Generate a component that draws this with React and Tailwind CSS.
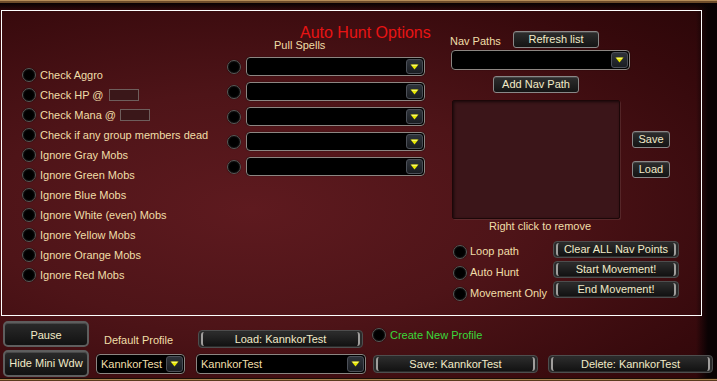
import React from "react";

const cream = "text-[#f0dea8]";

function Radio() {
  return (
    <div className="w-[14px] h-[14px] shrink-0 rounded-full bg-black border border-[#5c5a58] shadow-[inset_0_0_2px_rgba(255,255,255,0.15),0_0_1px_rgba(0,0,0,0.8)]" />
  );
}

function Arrow() {
  return (
    <div className="w-[17px] shrink-0 my-[1px] mr-[1px] rounded-[3px] bg-[linear-gradient(to_bottom,#2e333a,#1a1d22)] border border-[#4c5058] flex items-center justify-center">
      <svg width="9" height="6" viewBox="0 0 9 6">
        <polygon points="0.5,0.5 8.5,0.5 4.5,5.5" fill="#e8e800" />
        <polygon points="1.5,0.8 7.5,0.8 6.8,1.8 2.2,1.8" fill="#fdfd90" />
      </svg>
    </div>
  );
}

function Dropdown({ w, h, text }) {
  return (
    <div
      className={`${w} ${h} shrink-0 flex rounded-[4px] border border-[#8c8682] bg-black shadow-[0_0_1px_rgba(0,0,0,0.9)]`}
    >
      <div className={`flex-1 pl-[4px] flex items-center text-[11px] ${cream} leading-none`}>{text}</div>
      <Arrow />
    </div>
  );
}

function Btn({ w, h, children, extra = "" }) {
  return (
    <div
      className={`${w} ${h} ${extra} shrink-0 rounded-[3px] border border-[#8a8888] bg-[linear-gradient(to_bottom,#2e2e2e,#141414)] shadow-[inset_0_1px_0_rgba(255,255,255,0.12)] flex items-center justify-center text-[11px] text-[#f2ebc8] leading-none`}
    >
      {children}
    </div>
  );
}

function CapBtn({ w, h, children, extra = "" }) {
  return (
    <div
      className={`${w} ${h} ${extra} shrink-0 rounded-[4px] border border-[#4e4e4e] bg-[#2a2a2a] px-[2px] py-[1px] flex`}
    >
      <div className="flex-1 rounded-[3px] border-x-2 border-[#a09e9c] bg-[linear-gradient(to_bottom,#2c2c2c,#121212)] flex items-center justify-center text-[11px] text-[#f2ebc8] leading-none">
        {children}
      </div>
    </div>
  );
}

function BigBtn({ w, h, children, extra = "" }) {
  return (
    <div
      className={`${w} ${h} ${extra} shrink-0 rounded-[5px] border-2 border-[#5e5e5e] bg-[linear-gradient(to_bottom,#2a2a2a,#121212)] shadow-[inset_0_1px_0_rgba(255,255,255,0.15)] flex justify-center text-[11px] text-[#f2ebc8] leading-none`}
    >
      {children}
    </div>
  );
}

const leftRows = [
  "Check Aggro",
  "Check HP @",
  "Check Mana @",
  "Check if any group members dead",
  "Ignore Gray Mobs",
  "Ignore Green Mobs",
  "Ignore Blue Mobs",
  "Ignore White (even) Mobs",
  "Ignore Yellow Mobs",
  "Ignore Orange Mobs",
  "Ignore Red Mobs",
];

export default function App() {
  return (
    <div className="w-[717px] h-[381px] flex flex-col overflow-hidden font-['Liberation_Sans',Arial,sans-serif] bg-black">
      <div className="h-[1px] bg-[#b48c58]" />
      <div className="h-[2px] bg-[#6e4c2a]" />
      <div className="flex-1 flex flex-col pt-[7px] pl-[1px] bg-[linear-gradient(to_bottom,#080102_0px,rgba(8,1,2,0)_9px),linear-gradient(to_right,rgba(8,1,2,0)_696px,#0a0203_708px),radial-gradient(ellipse_at_35%_55%,#5e1a1f_0%,#4e1418_40%,#36090c_80%,#22050700_100%),linear-gradient(#2a0608,#2a0608)]">
        {/* main box */}
        <div className="w-[701px] h-[306px] shrink-0 border border-white flex items-start">
          {/* left column */}
          <div className="ml-[20px] w-[205px] pt-[54px] flex flex-col">
            {leftRows.map((t, i) => (
              <div key={t} className="h-[20px] flex items-center gap-[4px]">
                <Radio />
                <span className={`text-[11px] ${cream} leading-none whitespace-nowrap`}>{t}</span>
                {i === 1 && (
                  <div className="ml-[1px] w-[30px] h-[12px] bg-[#3a1719] border border-[#6e5e5c]" />
                )}
                {i === 2 && (
                  <div className="ml-[0px] w-[30px] h-[12px] bg-[#3a1719] border border-[#6e5e5c]" />
                )}
              </div>
            ))}
          </div>

          {/* middle column */}
          <div className="w-[223px] pt-[13px] flex flex-col">
            <div className="ml-[73px] h-[18px] leading-[18px] text-[16px] text-[#e81414] whitespace-nowrap">
              Auto Hunt Options
            </div>
            <div className={`ml-[47px] mt-[-3px] leading-[12px] text-[11px] ${cream}`}>Pull Spells</div>
            <div className="mt-[6px] flex flex-col gap-[6px]">
              {[0, 1, 2, 3, 4].map((i) => (
                <div key={i} className="h-[19px] flex items-center gap-[5px]">
                  <Radio />
                  <Dropdown w="w-[179px]" h="h-[19px]" text="" />
                </div>
              ))}
            </div>
          </div>

          {/* right column */}
          <div className="pt-[20px] flex flex-col">
            <div className="h-[17px] flex items-center">
              <span className={`w-[63px] text-[11px] ${cream} leading-none pt-[3px]`}>Nav Paths</span>
              <Btn w="w-[86px]" h="h-[17px]">Refresh list</Btn>
            </div>
            <div className="mt-[2px] ml-[1px]">
              <Dropdown w="w-[179px]" h="h-[20px]" text="" />
            </div>
            <Btn w="w-[86px]" h="h-[17px]" extra="mt-[6px] ml-[43px]">Add Nav Path</Btn>
            <div className="mt-[7px] flex items-start">
              <div className="ml-[2px] w-[168px] h-[119px] rounded-[2px] bg-[#3b1519] border border-[#1c0708] shadow-[inset_1px_1px_3px_rgba(0,0,0,0.6),1px_1px_0_rgba(120,80,80,0.35)]" />
              <div className="ml-[12px] pt-[31px] flex flex-col gap-[13px]">
                <Btn w="w-[38px]" h="h-[17px]">Save</Btn>
                <Btn w="w-[38px]" h="h-[17px]">Load</Btn>
              </div>
            </div>
            <div className={`ml-[39px] h-[14px] leading-[14px] text-[11px] ${cream}`}>Right click to remove</div>
            <div className="mt-[8px] flex items-start">
              <div className="ml-[3px] w-[100px] flex flex-col">
                {["Loop path", "Auto Hunt", "Movement Only"].map((t) => (
                  <div key={t} className="h-[21px] flex items-center gap-[3px]">
                    <Radio />
                    <span className={`text-[11px] ${cream} leading-none whitespace-nowrap`}>{t}</span>
                  </div>
                ))}
              </div>
              <div className="flex flex-col gap-[3px]">
                <CapBtn w="w-[126px]" h="h-[17px]">Clear ALL Nav Points</CapBtn>
                <CapBtn w="w-[126px]" h="h-[17px]">Start Movement!</CapBtn>
                <CapBtn w="w-[126px]" h="h-[17px]">End Movement!</CapBtn>
              </div>
            </div>
          </div>
        </div>

        {/* bottom rows */}
        <div className="mt-[5px] pl-[2px] flex items-start h-[26px]">
          <BigBtn w="w-[86px]" h="h-[26px]" extra="pt-[7px]">Pause</BigBtn>
          <span className={`ml-[15px] mt-[12px] w-[94px] leading-[14px] text-[11px] ${cream} whitespace-nowrap`}>
            Default Profile
          </span>
          <CapBtn w="w-[165px]" h="h-[18px]" extra="mt-[9px]">Load: KannkorTest</CapBtn>
          <div className="ml-[9px] mt-[7px] flex items-center gap-[4px]">
            <Radio />
            <span className="text-[11px] text-[#3ad83a] leading-none whitespace-nowrap">Create New Profile</span>
          </div>
        </div>
        <div className="mt-[3px] pl-[2px] flex items-start h-[27px]">
          <BigBtn w="w-[86px]" h="h-[27px]" extra="items-center">Hide Mini Wdw</BigBtn>
          <div className="ml-[7px] mt-[4px]">
            <Dropdown w="w-[89px]" h="h-[20px]" text="KannkorTest" />
          </div>
          <div className="ml-[11px] mt-[4px]">
            <Dropdown w="w-[170px]" h="h-[20px]" text="KannkorTest" />
          </div>
          <CapBtn w="w-[165px]" h="h-[18px]" extra="ml-[7px] mt-[5px]">Save: KannkorTest</CapBtn>
          <CapBtn w="w-[165px]" h="h-[18px]" extra="ml-[10px] mt-[5px]">Delete: KannkorTest</CapBtn>
        </div>
      </div>
      <div className="h-[1px] bg-[#1a0e06]" />
      <div className="h-[1px] bg-[#a88250]" />
      <div className="h-[1px] bg-[#5a3c1e]" />
    </div>
  );
}
